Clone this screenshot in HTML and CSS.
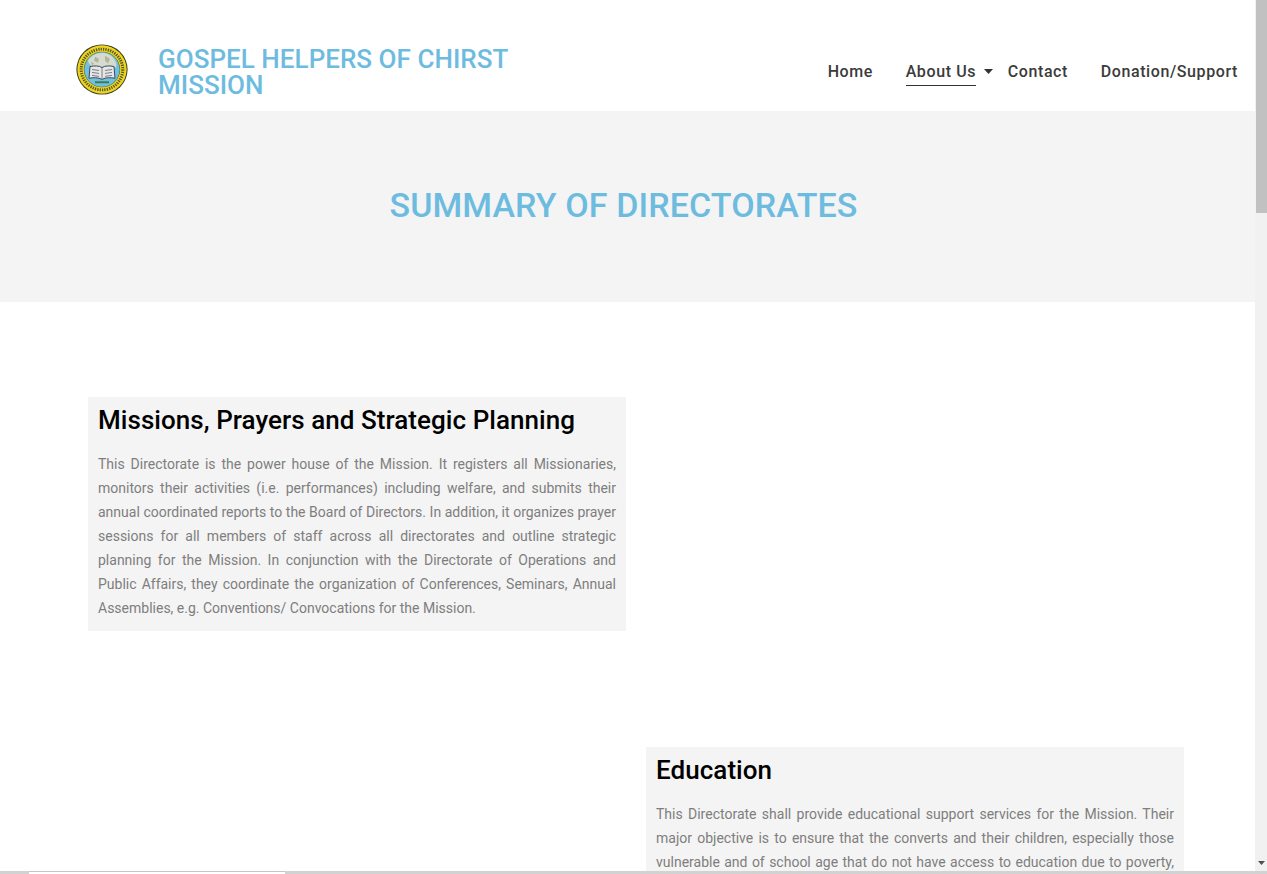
FILE: index.html
```html
<!DOCTYPE html>
<html lang="en">
<head>
<meta charset="utf-8">
<title>Summary of Directorates</title>
<link rel="stylesheet" href="styles.css">
</head>
<body>
<div class="window">
  <div class="page">
    <header class="header">
      <div class="brand">
        <svg class="logo" width="52" height="51" viewBox="0 0 52 52" preserveAspectRatio="none" aria-hidden="true">
          <circle cx="26" cy="26" r="25.6" fill="#3a3a1c"/>
          <circle cx="26" cy="26" r="24.6" fill="#ecd41f"/>
          <circle cx="26" cy="26" r="20.8" fill="none" stroke="#56562a" stroke-width="3" stroke-dasharray="1.3 1.1"/>
          <circle cx="26" cy="26" r="18.2" fill="#5a6a3a"/>
          <circle cx="26" cy="26" r="17.6" fill="#6fc0e0"/>
          <path d="M12 17c3-5 9-8 14-8 4 0 9 2 12 6 2 3 3 6 2 9-3 0-5-1-8 0-4 1-8-1-11 1-4 0-8-4-9-8z" fill="#d5dbd0"/>
          <path d="M19 13l4 2-1 4-4-2zM29 12l5 3-2 5-3-3zM15 18l3 2-2 2z" fill="#b7b394"/>
          <path d="M13 35l1-12c4-1 9-1 12 1 3-2 8-2 12-1l1 12c-4-1-9-1-13 1-4-2-9-2-13-1z" fill="#e6e6e2" stroke="#3c4658" stroke-width="1"/>
          <path d="M26 24v11M16 26l7 1M16 29l7 1M16 32l7 1M29 27l7-1M29 30l7-1M29 33l7-1" stroke="#6a7284" stroke-width=".9"/>
          <path d="M19 38h14v2H19z" fill="#3f7a4c"/>
        </svg>
        <h1 class="site-title">GOSPEL HELPERS OF CHIRST MISSION</h1>
      </div>
      <nav class="nav">
        <a class="nav-link" href="#">Home</a>
        <span class="nav-drop">
          <a class="nav-link is-active" href="#">About Us</a>
          <svg class="caret" width="9" height="5" viewBox="0 0 9 5" aria-hidden="true"><path d="M0 0h9L4.500 5z" fill="#333"/></svg>
        </span>
        <a class="nav-link" href="#">Contact</a>
        <a class="nav-link" href="#">Donation/Support</a>
      </nav>
    </header>

    <section class="hero">
      <h2 class="hero-title">SUMMARY OF DIRECTORATES</h2>
    </section>

    <main class="grid">
      <article class="card">
        <h3 class="card-title">Missions, Prayers and Strategic Planning</h3>
        <p class="card-text">This Directorate is the power house of the Mission. It registers all Missionaries, monitors their activities (i.e. performances) including welfare, and submits their annual coordinated reports to the Board of Directors. In addition, it organizes prayer sessions for all members of staff across all directorates and outline strategic planning for the Mission. In conjunction with the Directorate of Operations and Public Affairs, they coordinate the organization of Conferences, Seminars, Annual Assemblies, e.g. Conventions/ Convocations for the Mission.</p>
      </article>
      <article class="card card-right">
        <h3 class="card-title">Education</h3>
        <p class="card-text">This Directorate shall provide educational support services for the Mission. Their major objective is to ensure that the converts and their children, especially those vulnerable and of school age that do not have access to education due to poverty, are given the needed support to attain their educational goals in life and in the Mission.</p>
      </article>
    </main>
  </div>

  <div class="vscroll">
    <div class="vthumb"></div>
    <div class="vtrack"></div>
    <svg class="varrow" width="7" height="4" viewBox="0 0 7 4" aria-hidden="true"><path d="M0 0h7L3.500 4z" fill="#505050"/></svg>
  </div>
  <div class="hscroll"><div class="hthumb"></div></div>
</div>
</body>
</html>
```
FILE: styles.css
```css
* { box-sizing: border-box; }
html, body { margin: 0; padding: 0; height: 100%; overflow: hidden; background: #fff; }
body { font-family: Roboto, "Liberation Sans", sans-serif; }

.window { position: relative; display: flex; height: 874px; overflow: hidden; }
.page { flex: 1; min-width: 0; }

.header { display: flex; justify-content: space-between; align-items: flex-start; height: 111px; padding: 44px 17px 0 76px; }
.brand { display: flex; align-items: flex-start; gap: 30px; }
.logo { display: block; flex: none; }
.site-title { width: 380px; margin: 2px 0 0; font-size: 26px; line-height: 26px; font-weight: 500; letter-spacing: .03px; color: #6dbce0; }

.nav { display: flex; gap: 32.7px; padding-top: 17px; }
.nav-drop { display: flex; align-items: flex-start; gap: 8px; margin-right: -18px; }
.nav-link { display: block; height: 25px; font-size: 16px; line-height: 21px; font-weight: 500; letter-spacing: .6px; color: #3b3b3b; text-decoration: none; }
.nav-link.is-active { border-bottom: 1px solid #333; }
.caret { margin-top: 8px; }

.hero { height: 191px; padding: 74px 8px 0 0; background: #f4f4f4; text-align: center; }
.hero-title { margin: 0; font-size: 34px; line-height: 40px; font-weight: 500; letter-spacing: .1px; color: #6dbce0; }

.grid { display: grid; grid-template-columns: 538px 538px; column-gap: 20px; row-gap: 116px; padding: 95px 0 0 88px; }
.card { padding: 10px 10px 11px; background: #f4f4f4; }
.card-right { grid-column: 2; grid-row: 2; }
.card-title { margin: 0 0 19px; font-size: 26px; line-height: 26px; font-weight: 500; letter-spacing: .05px; color: #000; }
.card-text { margin: 0; font-size: 14px; line-height: 24px; color: #7e7e7e; text-align: justify; }

.vscroll { display: flex; flex-direction: column; align-items: center; flex: none; width: 12px; background: #f1f1f1; }
.vthumb { width: 11px; height: 213px; margin-left: 1px; background: #c1c1c1; }
.vtrack { flex: 1; }
.varrow { margin-bottom: 9px; }

.hscroll { position: absolute; left: 0; right: 0; bottom: 0; height: 3px; background: #d2d2d2; }
.hthumb { width: 256px; height: 3px; margin-left: 29px; border-top: 1px solid #c6c6c6; background: #fff; }
```
